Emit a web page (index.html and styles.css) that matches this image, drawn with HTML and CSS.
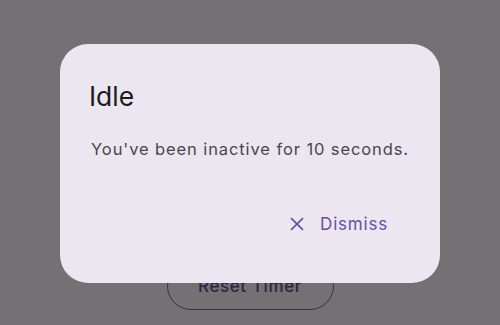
FILE: index.html
```html
<!DOCTYPE html>
<html>
<head>
<meta charset="utf-8">
<link rel="stylesheet" href="styles.css">
</head>
<body>
<main class="page">
  <button class="outlined-btn">Reset Timer</button>
</main>
<div class="scrim">
  <div class="dialog" role="dialog">
    <h1 class="dialog-title">Idle</h1>
    <p class="dialog-text">You've been inactive for 10 seconds.</p>
    <div class="dialog-actions">
      <button class="text-btn">
        <svg class="btn-icon" viewBox="0 0 24 24" width="22" height="22"><path d="M5.5 5.5 18.5 18.5M18.5 5.5 5.5 18.5" stroke="currentColor" stroke-width="1.8" fill="none"/></svg>
        <span>Dismiss</span>
      </button>
    </div>
  </div>
</div>
</body>
</html>
```
FILE: styles.css
```css
html, body {
  margin: 0;
  padding: 0;
  width: 500px;
  height: 325px;
  overflow: hidden;
}
body {
  background: #fef7ff;
  font-family: Inter, Roboto, "Noto Sans", sans-serif;
}
.page {
  height: 325px;
  display: flex;
  flex-direction: column;
  align-items: center;
  justify-content: flex-end;
  padding-bottom: 15px;
  box-sizing: border-box;
}
.outlined-btn {
  width: 167px;
  height: 48px;
  border-radius: 24px;
  border: 1px solid #79747e;
  background: transparent;
  color: #65558f;
  font-family: inherit;
  font-size: 17px;
  letter-spacing: 0.6px;
  font-weight: 500;
  padding: 0;
}
.scrim {
  position: fixed;
  inset: 0;
  background: rgba(0, 0, 0, 0.545);
  display: flex;
  align-items: flex-start;
  justify-content: center;
  padding-top: 44px;
}
.dialog {
  width: 380px;
  height: 239px;
  box-sizing: border-box;
  background: #ece6f0;
  border-radius: 28px;
  padding: 36px 29px 0 29px;
  display: flex;
  flex-direction: column;
}
.dialog-title {
  margin: 0;
  font-size: 26.5px;
  font-weight: 400;
  line-height: 32px;
  color: #1d1b20;
}
.dialog-text {
  margin: 25px 0 0 2px;
  font-size: 16.5px;
  line-height: 24px;
  letter-spacing: 0.9px;
  color: #49454f;
}
.dialog-actions {
  display: flex;
  justify-content: flex-end;
  margin-top: 39px;
}
.text-btn {
  display: flex;
  align-items: center;
  gap: 12px;
  background: transparent;
  border: none;
  padding: 0 23px 0 12px;
  margin-right: 0;
  height: 48px;
  color: #6750a4;
  font-family: inherit;
  font-size: 17px;
  font-weight: 400;
  letter-spacing: 0.8px;
}
.btn-icon {
  display: block;
}
```
